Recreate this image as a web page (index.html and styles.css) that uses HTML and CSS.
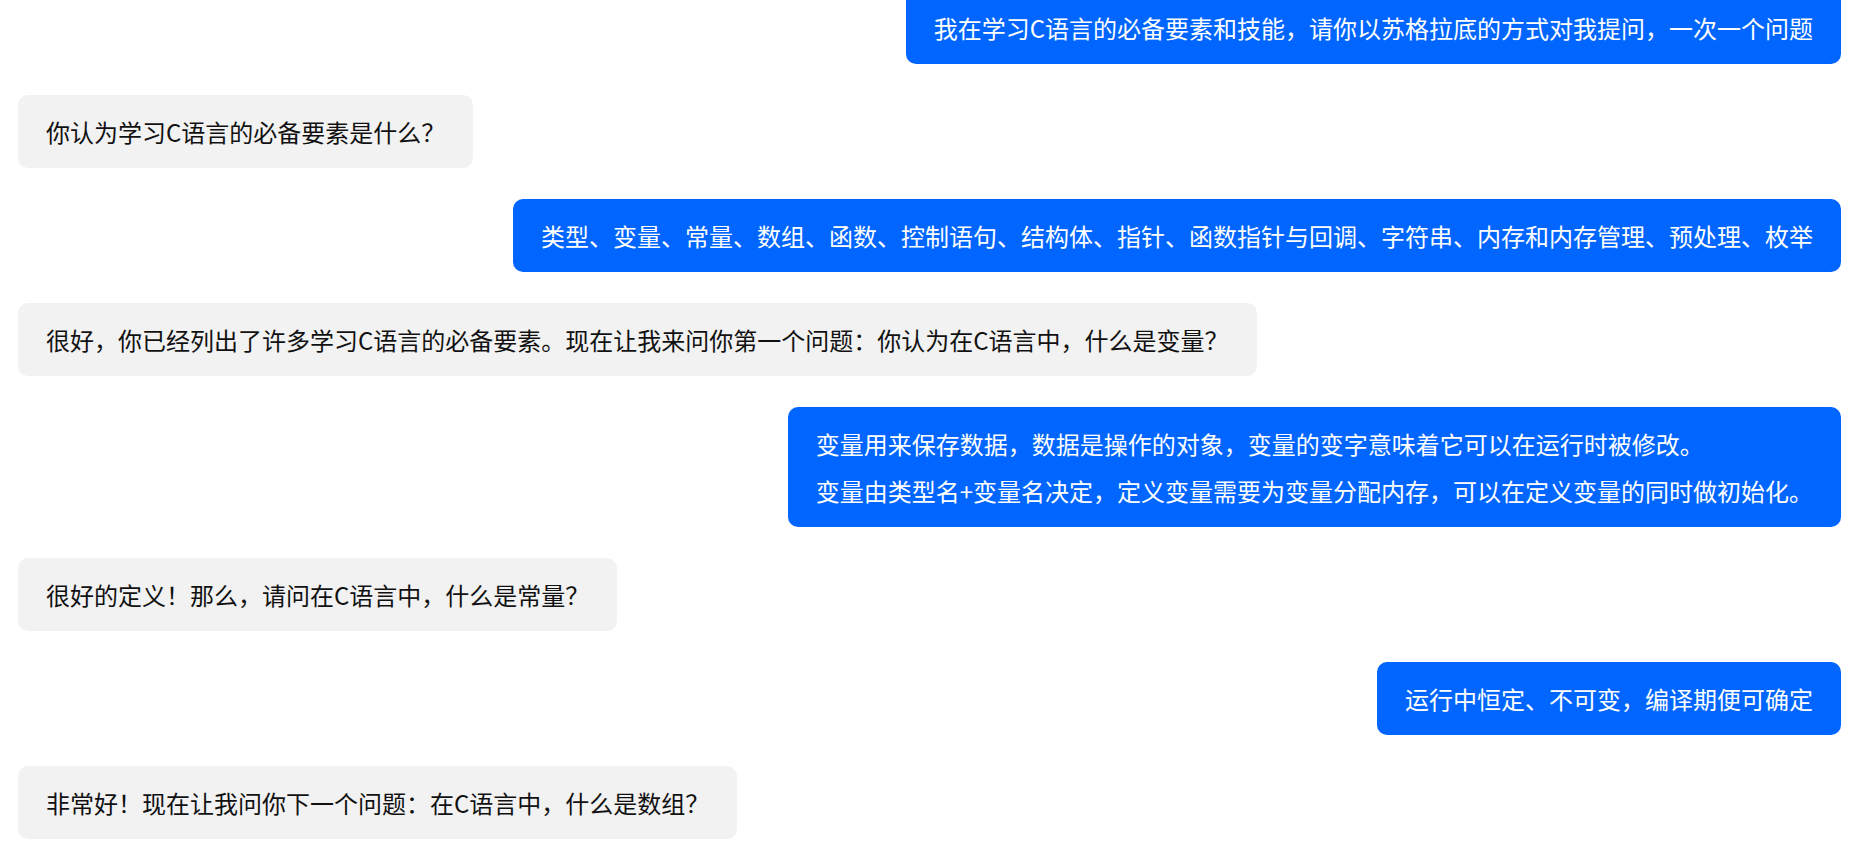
FILE: index.html
```html
<!DOCTYPE html>
<html lang="zh-CN">

<head>
    <meta charset="UTF-8">
    <meta name="viewport" content="width=device-width, initial-scale=1.0">
    <title>C语言 苏格拉底式提问</title>
    <link rel="stylesheet" href="styles.css">
</head>

<body>
    <div class="chat">
        <div class="msg user">
            <div class="bubble">
                <p>我在学习C语言的必备要素和技能，请你以苏格拉底的方式对我提问，一次一个问题</p>
            </div>
        </div>
        <div class="msg bot">
            <div class="bubble">
                <p>你认为学习C语言的必备要素是什么？</p>
            </div>
        </div>
        <div class="msg user">
            <div class="bubble">
                <p>类型、变量、常量、数组、函数、控制语句、结构体、指针、函数指针与回调、字符串、内存和内存管理、预处理、枚举</p>
            </div>
        </div>
        <div class="msg bot">
            <div class="bubble">
                <p>很好，你已经列出了许多学习C语言的必备要素。现在让我来问你第一个问题：你认为在C语言中，什么是变量？</p>
            </div>
        </div>
        <div class="msg user">
            <div class="bubble">
                <p>变量用来保存数据，数据是操作的对象，变量的变字意味着它可以在运行时被修改。</p>
                <p>变量由类型名+变量名决定，定义变量需要为变量分配内存，可以在定义变量的同时做初始化。</p>
            </div>
        </div>
        <div class="msg bot">
            <div class="bubble">
                <p>很好的定义！那么，请问在C语言中，什么是常量？</p>
            </div>
        </div>
        <div class="msg user">
            <div class="bubble">
                <p>运行中恒定、不可变，编译期便可确定</p>
            </div>
        </div>
        <div class="msg bot">
            <div class="bubble">
                <p>非常好！现在让我问你下一个问题：在C语言中，什么是数组？</p>
            </div>
        </div>
    </div>
</body>

</html>
```

FILE: styles.css
```css
body {
    margin: 0;
    background: #fff;
    font-family: "Noto Sans CJK SC", "Microsoft YaHei", sans-serif;
    font-size: 24px;
    overflow: hidden;
}

/* page is scrolled a little, first bubble is cut at the top */
.chat {
    display: flex;
    flex-direction: column;
    gap: 31px;
    margin-top: -9px;
    padding: 0 11px 0 18px;
}

.msg {
    display: flex;
}

.msg.user {
    justify-content: flex-end;
}

.msg.bot {
    justify-content: flex-start;
}

.bubble {
    padding: 13px 28px;
    border-radius: 10px;
    white-space: nowrap;
}

.bubble p {
    margin: 0;
    line-height: 47px;
}

.user .bubble {
    background-color: #0066ff;
    color: #fff;
}

.bot .bubble {
    background-color: #f2f2f2;
    color: #111;
}
```
